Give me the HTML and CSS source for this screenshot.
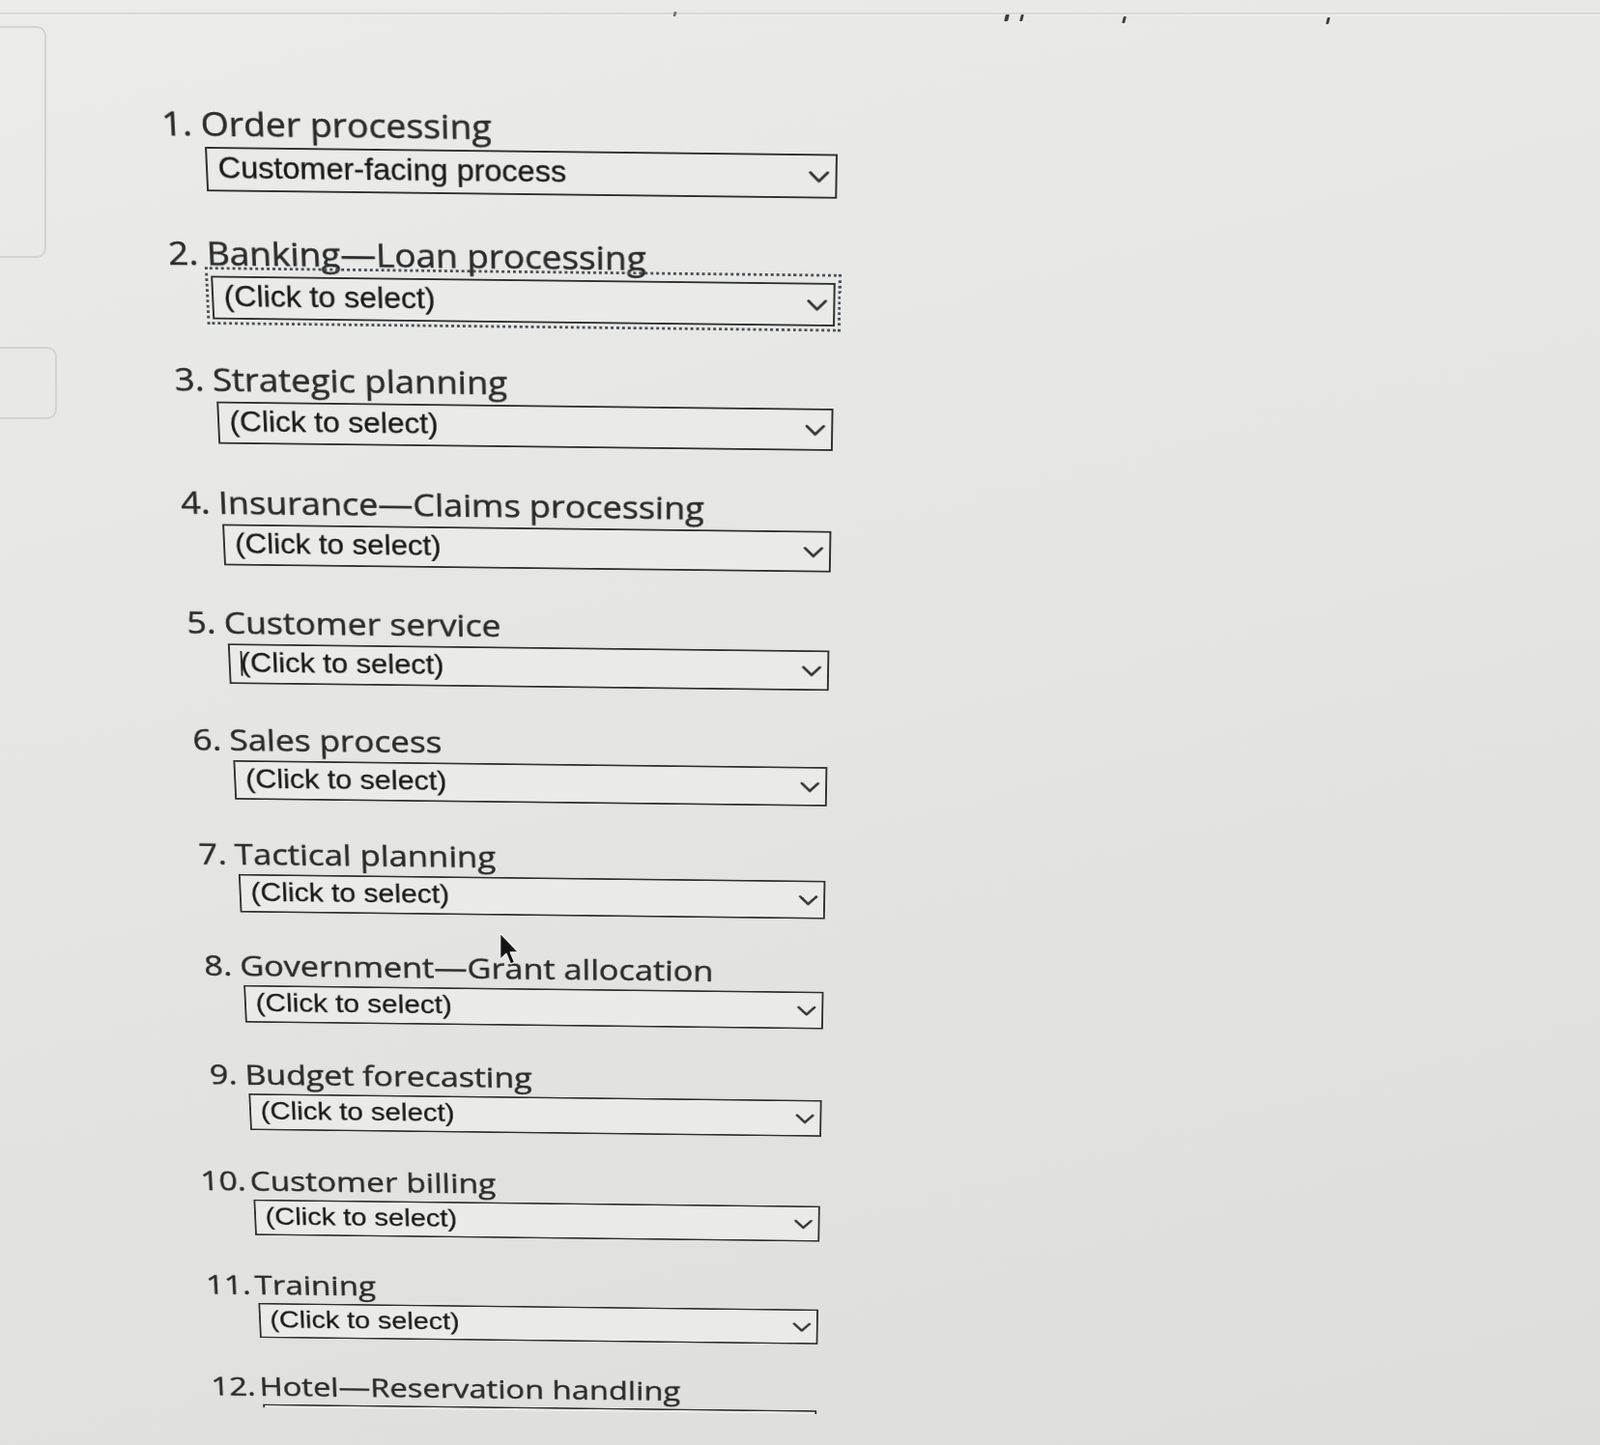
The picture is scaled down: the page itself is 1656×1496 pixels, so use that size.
FILE: index.html
```html
<!DOCTYPE html>
<html lang="en">
<head>
<meta charset="utf-8">
<title>Classify business processes</title>
<link rel="stylesheet" href="styles.css">
</head>
<body>
<div class="page">
  <div class="topbar">
    <span class="tick t1"></span>
    <span class="tick t2"></span>
    <span class="tick t3"></span>
    <span class="tick t4"></span>
    <span class="tick t5"></span>
  </div>
  <div class="content">
    <aside class="rail">
      <div class="tab tab-a"></div>
      <div class="tab tab-b"></div>
    </aside>
    <main class="sheet">
      <ol class="questions">
        <li class="q">
          <span class="num">1.</span>
          <label class="q-label" for="q1">Order processing</label>
          <div class="field">
            <select id="q1" class="q-select">
              <option>(Click to select)</option>
              <option selected>Customer-facing process</option>
              <option>Business-facing process</option>
            </select>
            <svg class="chev" viewBox="0 0 22 14"><polyline points="2,2 11,11.5 20,2"/></svg>
          </div>
        </li>
        <li class="q">
          <span class="num">2.</span>
          <label class="q-label" for="q2">Banking—Loan processing</label>
          <div class="field is-focused">
            <select id="q2" class="q-select">
              <option selected>(Click to select)</option>
              <option>Customer-facing process</option>
              <option>Business-facing process</option>
            </select>
            <svg class="chev" viewBox="0 0 22 14"><polyline points="2,2 11,11.5 20,2"/></svg>
          </div>
        </li>
        <li class="q">
          <span class="num">3.</span>
          <label class="q-label" for="q3">Strategic planning</label>
          <div class="field">
            <select id="q3" class="q-select">
              <option selected>(Click to select)</option>
              <option>Customer-facing process</option>
              <option>Business-facing process</option>
            </select>
            <svg class="chev" viewBox="0 0 22 14"><polyline points="2,2 11,11.5 20,2"/></svg>
          </div>
        </li>
        <li class="q">
          <span class="num">4.</span>
          <label class="q-label" for="q4">Insurance—Claims processing</label>
          <div class="field">
            <select id="q4" class="q-select">
              <option selected>(Click to select)</option>
              <option>Customer-facing process</option>
              <option>Business-facing process</option>
            </select>
            <svg class="chev" viewBox="0 0 22 14"><polyline points="2,2 11,11.5 20,2"/></svg>
          </div>
        </li>
        <li class="q">
          <span class="num">5.</span>
          <label class="q-label" for="q5">Customer service</label>
          <div class="field">
            <select id="q5" class="q-select">
              <option selected>(Click to select)</option>
              <option>Customer-facing process</option>
              <option>Business-facing process</option>
            </select>
            <span class="ibeam"></span>
            <svg class="chev" viewBox="0 0 22 14"><polyline points="2,2 11,11.5 20,2"/></svg>
          </div>
        </li>
        <li class="q">
          <span class="num">6.</span>
          <label class="q-label" for="q6">Sales process</label>
          <div class="field">
            <select id="q6" class="q-select">
              <option selected>(Click to select)</option>
              <option>Customer-facing process</option>
              <option>Business-facing process</option>
            </select>
            <svg class="chev" viewBox="0 0 22 14"><polyline points="2,2 11,11.5 20,2"/></svg>
          </div>
        </li>
        <li class="q">
          <span class="num">7.</span>
          <label class="q-label" for="q7">Tactical planning</label>
          <div class="field">
            <select id="q7" class="q-select">
              <option selected>(Click to select)</option>
              <option>Customer-facing process</option>
              <option>Business-facing process</option>
            </select>
            <svg class="chev" viewBox="0 0 22 14"><polyline points="2,2 11,11.5 20,2"/></svg>
          </div>
        </li>
        <li class="q">
          <span class="num">8.</span>
          <label class="q-label" for="q8">Government—Grant allocation</label>
          <div class="field">
            <select id="q8" class="q-select">
              <option selected>(Click to select)</option>
              <option>Customer-facing process</option>
              <option>Business-facing process</option>
            </select>
            <svg class="chev" viewBox="0 0 22 14"><polyline points="2,2 11,11.5 20,2"/></svg>
          </div>
        </li>
        <li class="q">
          <span class="num">9.</span>
          <label class="q-label" for="q9">Budget forecasting</label>
          <div class="field">
            <select id="q9" class="q-select">
              <option selected>(Click to select)</option>
              <option>Customer-facing process</option>
              <option>Business-facing process</option>
            </select>
            <svg class="chev" viewBox="0 0 22 14"><polyline points="2,2 11,11.5 20,2"/></svg>
          </div>
        </li>
        <li class="q">
          <span class="num">10.</span>
          <label class="q-label" for="q10">Customer billing</label>
          <div class="field">
            <select id="q10" class="q-select">
              <option selected>(Click to select)</option>
              <option>Customer-facing process</option>
              <option>Business-facing process</option>
            </select>
            <svg class="chev" viewBox="0 0 22 14"><polyline points="2,2 11,11.5 20,2"/></svg>
          </div>
        </li>
        <li class="q">
          <span class="num">11.</span>
          <label class="q-label" for="q11">Training</label>
          <div class="field">
            <select id="q11" class="q-select">
              <option selected>(Click to select)</option>
              <option>Customer-facing process</option>
              <option>Business-facing process</option>
            </select>
            <svg class="chev" viewBox="0 0 22 14"><polyline points="2,2 11,11.5 20,2"/></svg>
          </div>
        </li>
        <li class="q">
          <span class="num">12.</span>
          <label class="q-label" for="q12">Hotel—Reservation handling</label>
          <div class="field clip">
            <select id="q12" class="q-select">
              <option selected>(Click to select)</option>
              <option>Customer-facing process</option>
              <option>Business-facing process</option>
            </select>
          </div>
        </li>
      </ol>
    </main>
  </div>
  <svg class="cursor" viewBox="0 0 18 28" aria-hidden="true">
    <path d="M1.2 1 L1.2 22.5 L6.2 17.8 L9.8 26.4 L13 25 L9.5 16.6 L16.2 16.6 Z"/>
  </svg>
</div>
</body>
</html>
```

FILE: styles.css
```css
html, body {
  margin: 0;
  padding: 0;
  background: #e5e6e4;
}

.page {
  position: relative;
  width: 1656px;
  height: 1496px;
  overflow: hidden;
  background: linear-gradient(165deg, #ebecea 0%, #e5e6e4 45%, #dddedc 100%);
  font-family: "Open Sans", "Liberation Sans", Arial, sans-serif;
}

/* faint edge of the panel above */
.topbar {
  display: flex;
  align-items: flex-end;
  height: 13px;
  border-bottom: 2px solid #d9dad8;
  box-shadow: 0 1px 0 #f0f1ef;
}

.tick {
  flex: none;
  width: 3px;
  height: 7px;
  margin-bottom: -8px;
  background: #3e3e3e;
  border-radius: 1px;
  transform: skewX(-14deg);
}
.t1 { margin-left: 697px; height: 5px; margin-bottom: -4px; background: #777; }
.t2 { margin-left: 340px; width: 4px; margin-bottom: -9px; }
.t3 { margin-left: 12px; margin-bottom: -9px; }
.t4 { margin-left: 103px; margin-bottom: -11px; }
.t5 { margin-left: 208px; margin-bottom: -12px; }

.content {
  display: flex;
}

.rail {
  flex: none;
  width: 60px;
}

.tab {
  box-sizing: border-box;
  margin-left: -20px;
  border: 2px solid #d3d4d1;
  border-radius: 10px;
}
.tab-a {
  width: 68px;
  height: 240px;
  margin-top: 12px;
}
.tab-b {
  width: 79px;
  height: 75px;
  margin-top: 92px;
}

/* the form, photographed at an angle */
.sheet {
  flex: 1;
  transform-origin: 151.7px 136.7px;
  transform: matrix3d(1, 0.0116, 0, 0,
                      0.0438, 0.946, 0, 0.000091,
                      0, 0, 1, 0,
                      0, 0, 0, 1);
}

.questions {
  list-style: none;
  margin: 0;
  padding: 87.7px 0 0 91.7px;
}

.q {
  display: grid;
  grid-template-columns: 60px 655px;
  margin-bottom: 45px;
  color: #2b2b2b;
  font-size: 37.3px;
  font-weight: 500;
  line-height: 40px;
  -webkit-text-stroke: 0.55px #2b2b2b;
}

.num {
  grid-column: 1;
  grid-row: 1;
  text-align: right;
  padding-top: 3px;
  padding-right: 12px;
}

.q-label {
  grid-column: 2;
  grid-row: 1;
  padding-top: 3px;
  margin-left: -3px;
  white-space: nowrap;
}

.field {
  grid-column: 2;
  grid-row: 2;
  position: relative;
  width: 655px;
  margin-top: 6px;
}

.q-select {
  -webkit-appearance: none;
  appearance: none;
  display: block;
  box-sizing: border-box;
  width: 655px;
  height: 49px;
  margin: 0;
  padding: 0 44px 3px 11px;
  border: 2.5px solid #2f2f2f;
  border-radius: 0;
  background: #eaebe9;
  color: #1a1a1a;
  font-family: "Liberation Sans", Arial, sans-serif;
  font-size: 32.5px;
  -webkit-text-stroke: 0.35px #1a1a1a;
  outline: none;
}

.chev {
  position: absolute;
  right: 8px;
  top: 18px;
  width: 22px;
  height: 15px;
  pointer-events: none;
  fill: none;
  stroke: #333;
  stroke-width: 3;
  stroke-linecap: round;
  stroke-linejoin: round;
}

.is-focused::after {
  content: "";
  position: absolute;
  inset: -10px -6px -6px -6px;
  border: 3.5px dotted #4a5056;
  pointer-events: none;
}

.ibeam {
  position: absolute;
  left: 13px;
  top: 9px;
  width: 2px;
  height: 30px;
  background: #2a2a2a;
  pointer-events: none;
}

.clip {
  height: 5px;
  overflow: hidden;
}

.cursor {
  position: absolute;
  left: 516px;
  top: 965px;
  width: 23px;
  height: 35px;
  fill: #141414;
  stroke: #f4f4f4;
  stroke-width: 0.9;
  stroke-linejoin: round;
}
```
